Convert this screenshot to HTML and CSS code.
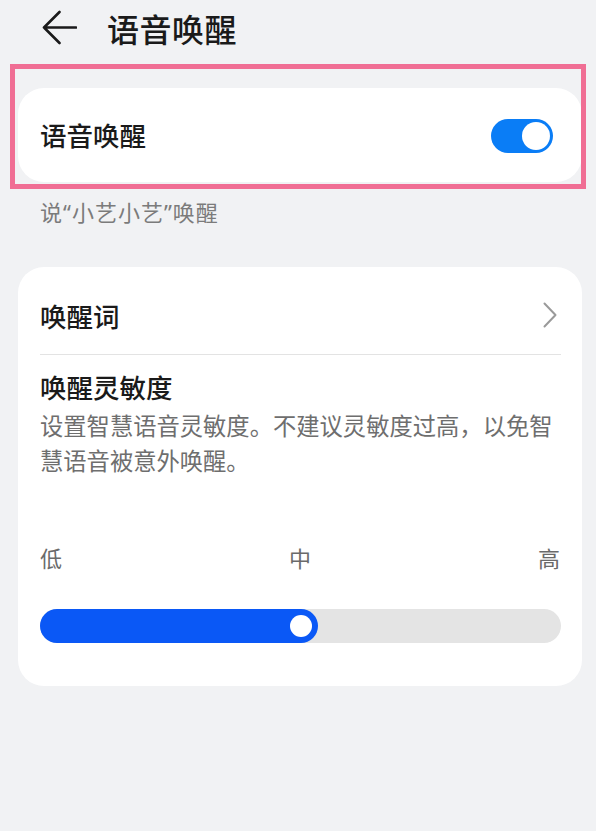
FILE: index.html
```html
<!DOCTYPE html>
<html lang="zh-CN">
<head>
<meta charset="utf-8">
<title>语音唤醒</title>
<link rel="stylesheet" href="styles.css">
</head>
<body>
<div class="page">
  <header class="header">
    <svg class="back" width="36" height="36" viewBox="0 0 36 36" aria-hidden="true">
      <path d="M3 17.5 H35 M18.5 2 L3 17.5 L18.5 33" fill="none" stroke="#1a1a1a" stroke-width="2.6" stroke-linecap="round" stroke-linejoin="round"/>
    </svg>
    <h1 class="title">语音唤醒</h1>
  </header>

  <section class="card card-switch">
    <span class="label">语音唤醒</span>
    <span class="toggle"><span class="toggle-knob"></span></span>
  </section>
  <p class="hint">说“小艺小艺”唤醒</p>

  <section class="card card-main">
    <div class="row-link">
      <span class="label">唤醒词</span>
      <svg class="chevron" width="16" height="26" viewBox="0 0 16 26" aria-hidden="true">
        <path d="M2.5 1.5 L13.5 13 L2.5 24.5" fill="none" stroke="#9a9a9a" stroke-width="2" stroke-linecap="round" stroke-linejoin="round"/>
      </svg>
    </div>
    <div class="divider"></div>
    <div class="label sens-title">唤醒灵敏度</div>
    <p class="desc">设置智慧语音灵敏度。不建议灵敏度过高，以免智慧语音被意外唤醒。</p>
    <div class="levels">
      <span>低</span><span>中</span><span>高</span>
    </div>
    <div class="slider">
      <div class="slider-fill" style="width:278px"><span class="slider-knob"></span></div>
    </div>
  </section>

  <div class="highlight"></div>
</div>
</body>
</html>
```

FILE: styles.css
```css
html, body {
  margin: 0;
  padding: 0;
  background: #f1f2f4;
}

body {
  font-family: "Noto Sans CJK SC", "Noto Sans", sans-serif;
  color: #1a1a1a;
  width: 596px;
  height: 831px;
  overflow: hidden;
}

.page {
  position: relative;
  height: 831px;
}

.header {
  display: flex;
  align-items: center;
  height: 56px;
  padding-left: 41px;
}

.back {
  display: block;
  flex: none;
}

.title {
  margin: 0 0 0 30px;
  font-size: 32px;
  font-weight: 500;
  line-height: 40px;
  letter-spacing: 0.5px;
}

.card {
  background: #ffffff;
  border-radius: 26px;
  margin-left: 18px;
  width: 564px;
  box-sizing: border-box;
  padding: 0 22px;
}

.card-switch {
  margin-top: 32px;
  height: 94px;
  display: flex;
  align-items: center;
  justify-content: space-between;
}

.label {
  font-size: 26.5px;
  font-weight: 500;
  line-height: 36px;
}

.toggle {
  position: relative;
  width: 62px;
  height: 34px;
  border-radius: 17px;
  background: #0a7df6;
  margin-right: 7px;
  margin-top: 2px;
}

.toggle-knob {
  position: absolute;
  right: 3px;
  top: 3px;
  width: 28px;
  height: 28px;
  border-radius: 50%;
  background: #ffffff;
}

.hint {
  margin: 15px 0 0;
  padding-left: 40px;
  font-family: "Noto Sans", "Noto Sans CJK SC", sans-serif;
  font-size: 22px;
  line-height: 30px;
  letter-spacing: 1px;
  color: #7b7b7b;
}

.card-main {
  margin-top: 40px;
  padding-bottom: 43px;
}

.row-link {
  display: flex;
  align-items: center;
  justify-content: space-between;
  padding-top: 31px;
  padding-bottom: 20px;
}

.chevron {
  display: block;
  margin-right: 2px;
  margin-top: -3px;
}

.divider {
  height: 1px;
  background: #e3e3e3;
  margin-right: -1px;
}

.sens-title {
  margin-top: 14px;
}

.desc {
  margin: 3px 0 0;
  font-size: 23.3px;
  line-height: 35px;
  color: #6e6e6e;
}

.levels {
  display: flex;
  justify-content: space-between;
  margin-top: 64px;
  font-size: 22px;
  line-height: 30px;
  color: #6a6a6a;
}

.slider {
  margin-top: 37px;
  height: 34px;
  border-radius: 17px;
  background: #e4e4e4;
  margin-right: -1px;
}

.slider-fill {
  position: relative;
  height: 34px;
  border-radius: 17px;
  background: #0a58f6;
}

.slider-knob {
  position: absolute;
  right: 6px;
  top: 6px;
  width: 22px;
  height: 22px;
  border-radius: 50%;
  background: #ffffff;
}

.highlight {
  position: absolute;
  left: 10px;
  top: 64px;
  width: 576px;
  height: 125px;
  box-sizing: border-box;
  border: 5px solid #f06e94;
  pointer-events: none;
}
```
